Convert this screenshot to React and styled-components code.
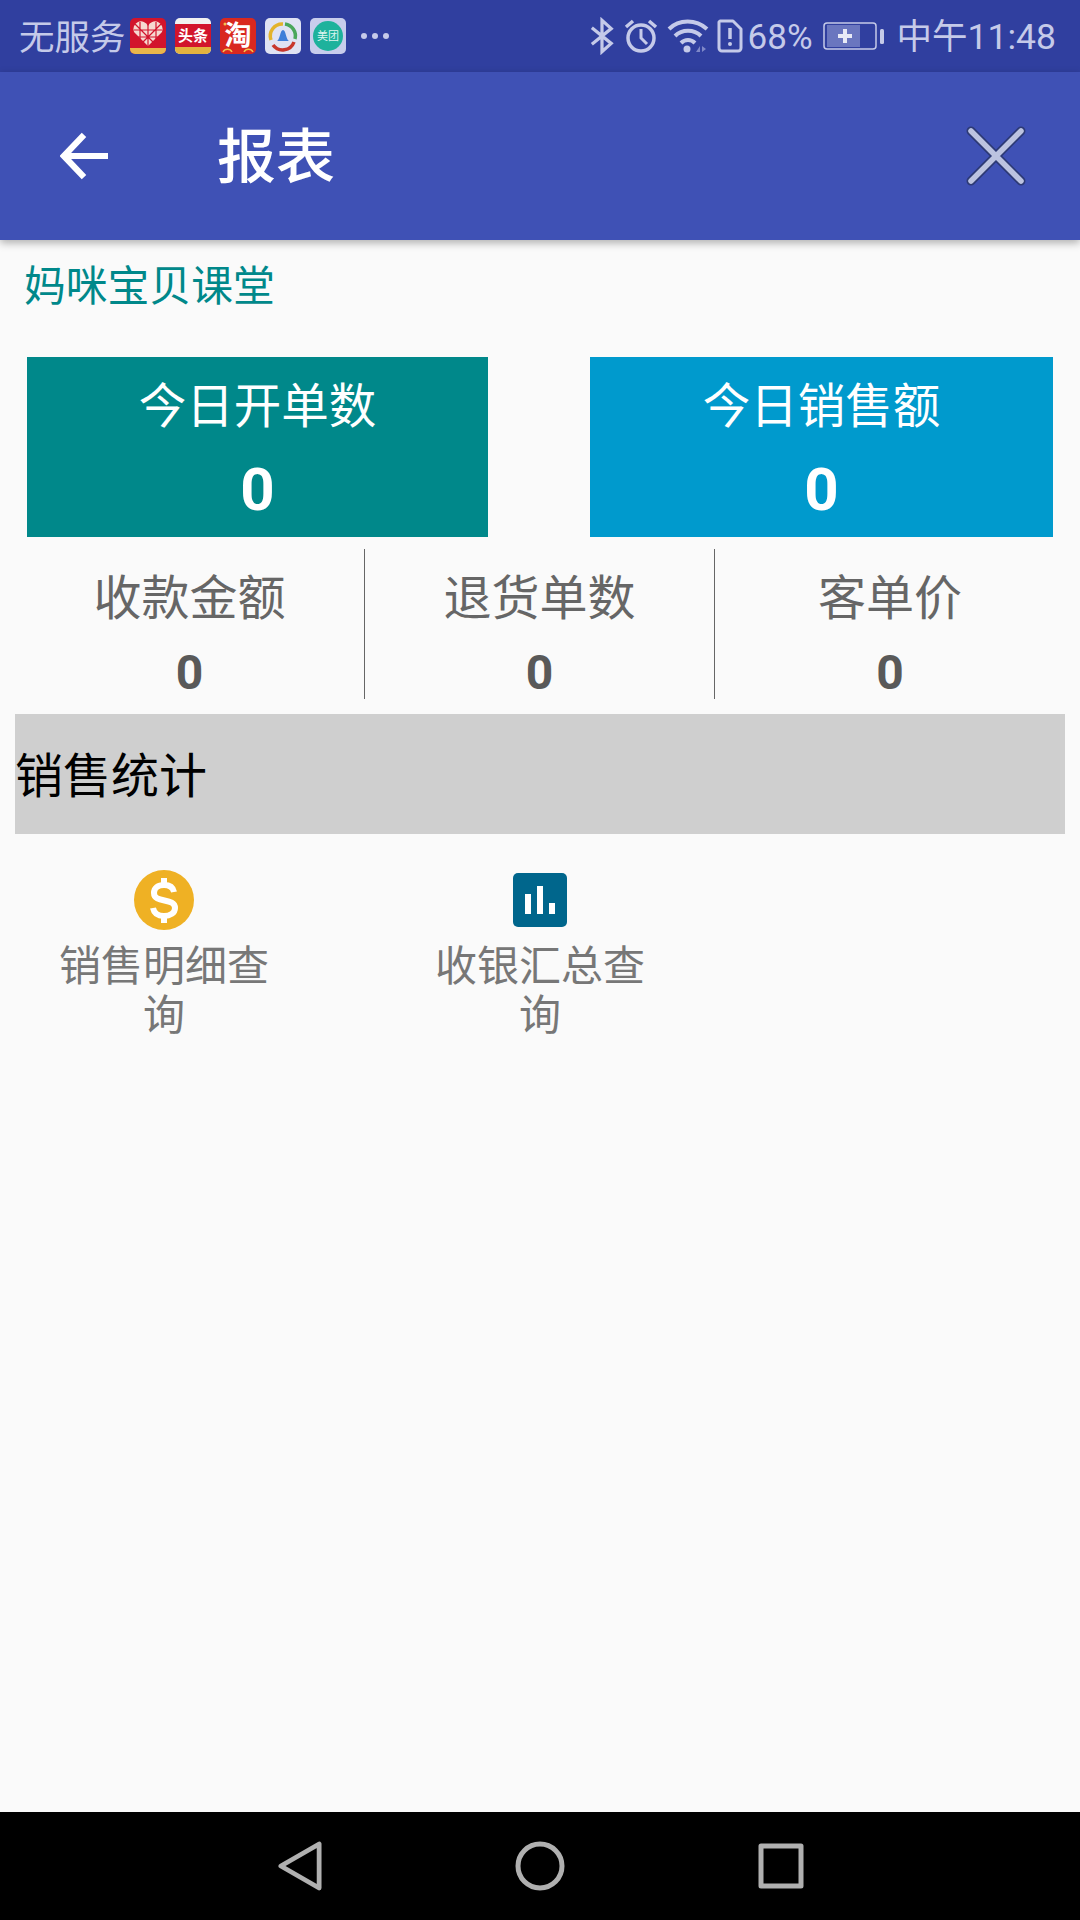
import React from 'react';
import styled, { createGlobalStyle } from 'styled-components';

const FONT = '"Roboto", "Noto Sans CJK SC", sans-serif';

const GlobalStyle = createGlobalStyle`
  html, body {
    margin: 0;
    padding: 0;
    background: #fafafa;
  }
  * {
    box-sizing: border-box;
  }
`;

const Page = styled.div`
  width: 1080px;
  height: 1920px;
  display: flex;
  flex-direction: column;
  overflow: hidden;
  background: #fafafa;
  font-family: ${FONT};
`;

const StatusBar = styled.div`
  height: 72px;
  flex: none;
  display: flex;
  align-items: center;
  justify-content: space-between;
  padding: 0 24px 0 19px;
  background: #303f9f;
  color: #c5cae9;
`;

const StatusGroup = styled.div`
  display: flex;
  align-items: center;
`;

const Carrier = styled.span`
  font-size: 35.5px;
  margin-right: 4px;
  padding-top: 3px;
  line-height: 72px;
  color: #c5cae9;
`;

const AppIcon = styled.div`
  width: 36px;
  height: 36px;
  margin-right: 9px;
  border-radius: 5px;
  overflow: hidden;
  flex: none;
  svg {
    display: block;
  }
`;

const Dots = styled.div`
  display: flex;
  gap: 5px;
  margin-left: 6px;
  span {
    width: 6px;
    height: 6px;
    border-radius: 50%;
    background: #c5cae9;
  }
`;

const StatusText = styled.span`
  font-size: ${(p) => p.$size || 34}px;
  margin-left: ${(p) => p.$left || 0}px;
  padding-top: 3px;
  line-height: 69px;
`;

const Header = styled.header`
  position: relative;
  z-index: 1;
  height: 168px;
  flex: none;
  display: flex;
  align-items: center;
  background: #3f51b5;
  box-shadow: 0 3px 8px rgba(0, 0, 0, 0.3);
`;

const BackButton = styled.div`
  width: 217px;
  padding-left: 60px;
  display: flex;
  align-items: center;
  svg {
    display: block;
  }
`;

const Title = styled.h1`
  flex: 1;
  margin: 0;
  padding-top: 3px;
  font-size: 59px;
  font-weight: 500;
  color: #fff;
  line-height: 1;
`;

const CloseButton = styled.div`
  margin-right: 54px;
  svg {
    display: block;
  }
`;

const ShopName = styled.div`
  height: 117px;
  padding: 23px 0 0 24px;
  font-size: 41.8px;
  line-height: 48px;
  color: #00888a;
`;

const Cards = styled.div`
  display: flex;
  justify-content: space-between;
  padding: 0 27px;
`;

const Card = styled.div`
  width: ${(p) => p.$width}px;
  height: 180px;
  display: flex;
  flex-direction: column;
  align-items: center;
  padding-top: 22px;
  background: ${(p) => p.$color};
  color: #fff;
`;

const CardLabel = styled.div`
  font-size: 47.5px;
  line-height: 56px;
`;

const CardValue = styled.div`
  margin-top: 20px;
  font-size: 60px;
  font-weight: 700;
  line-height: 70px;
`;

const Stats = styled.div`
  display: flex;
  margin-top: 12px;
  padding: 0 15px;
  height: 150px;
`;

const Stat = styled.div`
  width: ${(p) => p.$width}px;
  display: flex;
  flex-direction: column;
  align-items: center;
  padding-top: 22px;
  border-right: ${(p) => (p.$divider ? '1px solid #666' : 'none')};
  color: #666;
`;

const StatLabel = styled.div`
  font-size: 48px;
  line-height: 56px;
`;

const StatValue = styled.div`
  margin-top: 18px;
  font-size: 48px;
  font-weight: 700;
  line-height: 56px;
  color: #595959;
`;

const Section = styled.div`
  height: 120px;
  margin: 15px 15px 0;
  padding-bottom: 4px;
  display: flex;
  align-items: center;
  background: #cfcfcf;
  font-size: 48px;
  color: #000;
`;

const Shortcuts = styled.div`
  flex: 1;
  display: flex;
  gap: 76px;
  padding: 36px 0 0 14px;
`;

const Shortcut = styled.div`
  width: 300px;
  display: flex;
  flex-direction: column;
  align-items: center;
  color: #777;
`;

const ShortcutIcon = styled.div`
  height: 60px;
  display: flex;
  align-items: center;
  svg {
    display: block;
  }
`;

const ShortcutLabel = styled.div`
  width: 210px;
  margin-top: 12px;
  text-align: center;
  font-size: 42px;
  line-height: 49px;
`;

const NavBar = styled.nav`
  height: 108px;
  flex: none;
  display: flex;
  align-items: center;
  background: #000;
  padding-left: 278px;
  gap: 193px;
  svg {
    display: block;
  }
`;

const ShopIcon = () => (
  <svg width="36" height="36" viewBox="0 0 36 36">
    <rect width="36" height="36" fill="#d2142c" />
    <path d="M18 28 L4 14 a7 7 0 0 1 14 -6 a7 7 0 0 1 14 6 Z" fill="#f6d9d0" />
    <path d="M18 5 V28 M4 12 H32 M4 19 H32 M10 4 V24 M26 4 V24 M5 6 L25 26 M31 6 L11 26" stroke="#d2142c" strokeWidth="1.2" />
    <rect y="30" width="36" height="6" fill="#e9b64b" />
  </svg>
);

const NewsIcon = () => (
  <svg width="36" height="36" viewBox="0 0 36 36">
    <rect width="36" height="36" fill="#f1f1f1" />
    <rect y="6" width="36" height="23" fill="#d2142c" />
    <rect y="29" width="36" height="7" fill="#e3b23f" />
    <text x="18" y="23" textAnchor="middle" fontSize="15" fontWeight="700" fill="#fff" fontFamily={FONT}>头条</text>
  </svg>
);

const TaobaoIcon = () => (
  <svg width="36" height="36" viewBox="0 0 36 36">
    <rect width="36" height="36" fill="#d9281f" />
    <text x="18" y="27" textAnchor="middle" fontSize="27" fontWeight="700" fill="#fff" fontFamily={FONT}>淘</text>
    <circle cx="5" cy="6" r="1.5" fill="#f2c14e" />
    <path d="M3 34 a5 5 0 0 1 9 0 M24 34 a5 5 0 0 1 9 0" stroke="#f2c14e" strokeWidth="1.5" fill="none" />
  </svg>
);

const TencentIcon = () => (
  <svg width="36" height="36" viewBox="0 0 36 36">
    <rect width="36" height="36" fill="#dfe2f3" />
    <path d="M6 22 A12 12 0 0 1 18 6" stroke="#e3b32b" strokeWidth="3.5" fill="none" />
    <path d="M20 6 A12 12 0 0 1 30 21" stroke="#4aa75b" strokeWidth="3.5" fill="none" />
    <path d="M29 24 A12 12 0 0 1 8 27" stroke="#c8372c" strokeWidth="3.5" fill="none" />
    <path d="M12 23 C15 22 15 12 18 12 C21 12 21 22 24 23 Z" fill="#3f7fd8" />
  </svg>
);

const MeituanIcon = () => (
  <svg width="36" height="36" viewBox="0 0 36 36">
    <rect width="36" height="36" fill="#c8cdec" />
    <circle cx="18" cy="18" r="15" fill="#1eb29c" />
    <text x="18" y="22" textAnchor="middle" fontSize="11" fill="#dff5f0" fontFamily={FONT}>美团</text>
  </svg>
);

const BluetoothIcon = () => (
  <svg width="24" height="38" viewBox="0 0 26 38" fill="none" stroke="#c5cae9" strokeWidth="3.5">
    <path d="M2 10 L23 27 L13 36 V2 L23 11 L2 28" />
  </svg>
);

const AlarmIcon = () => (
  <svg width="34" height="36" viewBox="0 0 34 36" fill="none" stroke="#c5cae9" strokeWidth="3.5" style={{ marginLeft: 10 }}>
    <circle cx="17" cy="20" r="13" />
    <path d="M17 11 V20 L23 26" strokeWidth="3" />
    <path d="M2 9 L9 3 M32 9 L25 3" />
  </svg>
);

const WifiIcon = () => (
  <svg width="42" height="36" viewBox="0 0 42 36" fill="none" stroke="#c5cae9" strokeWidth="4" style={{ marginLeft: 9 }}>
    <path d="M2 11 C12 1 29 1 40 11" />
    <path d="M8 18 C15 11 27 11 34 18" />
    <path d="M14 25 C18 21 24 21 28 25" />
    <circle cx="20" cy="31" r="3.5" fill="#c5cae9" stroke="none" />
    <path d="M29 34 L33 28 V34 Z M35 28 V34 L39 31 Z" fill="#7f88c8" stroke="none" />
  </svg>
);

const SimAlertIcon = () => (
  <svg width="26" height="34" viewBox="0 0 26 34" fill="none" stroke="#c5cae9" strokeWidth="3" style={{ marginLeft: 8 }}>
    <path d="M3 2 H16 L24 10 V29 a3 3 0 0 1 -3 3 H5 a3 3 0 0 1 -3 -3 V3 Z" strokeLinejoin="round" />
    <path d="M13 9 V20" strokeWidth="3.5" />
    <circle cx="13" cy="25" r="2" fill="#c5cae9" stroke="none" />
  </svg>
);

const BatteryIcon = () => (
  <svg width="62" height="30" viewBox="0 0 62 30" style={{ marginLeft: 10 }}>
    <rect x="1" y="2" width="52" height="26" rx="3" fill="none" stroke="#c5cae9" strokeWidth="1.5" />
    <rect x="4" y="4" width="33" height="22" fill="#6a76bf" />
    <path d="M20 8 h4 v5 h5 v4 h-5 v5 h-4 v-5 h-5 v-4 h5 Z" fill="#e8eaf6" />
    <rect x="57" y="8" width="4" height="15" rx="1.5" fill="#c5cae9" />
  </svg>
);

const CoinIcon = () => (
  <svg width="60" height="60" viewBox="0 0 60 60">
    <circle cx="30" cy="30" r="30" fill="#efb124" />
    <path
      d="M40 22 C39 17 35 15 30 15 C24 15 20 18 20 23 C20 34 41 27 41 38 C41 43 36 46 30 46 C24 46 20 43 19 38"
      fill="none"
      stroke="#fff"
      strokeWidth="6"
    />
    <path d="M30 8 V15 M30 46 V53" stroke="#fff" strokeWidth="6" />
  </svg>
);

const ChartIcon = () => (
  <svg width="54" height="54" viewBox="0 0 54 54">
    <rect width="54" height="54" rx="5" fill="#00668c" />
    <rect x="12" y="21" width="6" height="20" fill="#fff" />
    <rect x="24" y="13" width="6" height="28" fill="#fff" />
    <rect x="36" y="30" width="6" height="11" fill="#fff" />
  </svg>
);

const cards = [
  { label: '今日开单数', value: 0, color: '#00888a', width: 461 },
  { label: '今日销售额', value: 0, color: '#009acd', width: 463 },
];

const stats = [
  { label: '收款金额', value: 0, width: 350, divider: true },
  { label: '退货单数', value: 0, width: 350, divider: true },
  { label: '客单价', value: 0, width: 350 },
];

const App = () => {
  return (
    <Page>
      <GlobalStyle />
      <StatusBar>
        <StatusGroup>
          <Carrier>无服务</Carrier>
          <AppIcon><ShopIcon /></AppIcon>
          <AppIcon><NewsIcon /></AppIcon>
          <AppIcon><TaobaoIcon /></AppIcon>
          <AppIcon><TencentIcon /></AppIcon>
          <AppIcon><MeituanIcon /></AppIcon>
          <Dots><span /><span /><span /></Dots>
        </StatusGroup>
        <StatusGroup>
          <BluetoothIcon />
          <AlarmIcon />
          <WifiIcon />
          <SimAlertIcon />
          <StatusText $size={35} $left={5}>68%</StatusText>
          <BatteryIcon />
          <StatusText $size={35.5} $left={12}>中午11:48</StatusText>
        </StatusGroup>
      </StatusBar>

      <Header>
        <BackButton>
          <svg width="48" height="48" viewBox="0 0 50 50" fill="none" stroke="#fff" strokeWidth="6.5">
            <path d="M50 25 H5" />
            <path d="M25 3 L4 25 L25 47" />
          </svg>
        </BackButton>
        <Title>报表</Title>
        <CloseButton>
          <svg width="60" height="60" viewBox="0 0 60 60" fill="none" strokeLinecap="round">
            <path d="M5 5 L55 55 M55 5 L5 55" stroke="#2d3a75" strokeWidth="9" />
            <path d="M5 5 L55 55 M55 5 L5 55" stroke="#bcc3e0" strokeWidth="5.5" />
          </svg>
        </CloseButton>
      </Header>

      <ShopName>妈咪宝贝课堂</ShopName>

      <Cards>
        {cards.map((item) => (
          <Card key={item.label} $color={item.color} $width={item.width}>
            <CardLabel>{item.label}</CardLabel>
            <CardValue>{item.value}</CardValue>
          </Card>
        ))}
      </Cards>

      <Stats>
        {stats.map((item) => (
          <Stat key={item.label} $width={item.width} $divider={item.divider}>
            <StatLabel>{item.label}</StatLabel>
            <StatValue>{item.value}</StatValue>
          </Stat>
        ))}
      </Stats>

      <Section>销售统计</Section>

      <Shortcuts>
        <Shortcut>
          <ShortcutIcon><CoinIcon /></ShortcutIcon>
          <ShortcutLabel>销售明细查询</ShortcutLabel>
        </Shortcut>
        <Shortcut>
          <ShortcutIcon><ChartIcon /></ShortcutIcon>
          <ShortcutLabel>收银汇总查询</ShortcutLabel>
        </Shortcut>
      </Shortcuts>

      <NavBar>
        <svg width="44" height="52" viewBox="0 0 46 52" fill="none" stroke="#b0b0b0" strokeWidth="5" strokeLinejoin="round">
          <path d="M3 26 L43 3 V49 Z" />
        </svg>
        <svg width="50" height="50" viewBox="0 0 50 50" fill="none" stroke="#b0b0b0" strokeWidth="5">
          <circle cx="25" cy="25" r="22" />
        </svg>
        <svg width="46" height="46" viewBox="0 0 46 46" fill="none" stroke="#b0b0b0" strokeWidth="5" strokeLinejoin="round">
          <rect x="3" y="3" width="40" height="40" />
        </svg>
      </NavBar>
    </Page>
  );
};

export default App;
